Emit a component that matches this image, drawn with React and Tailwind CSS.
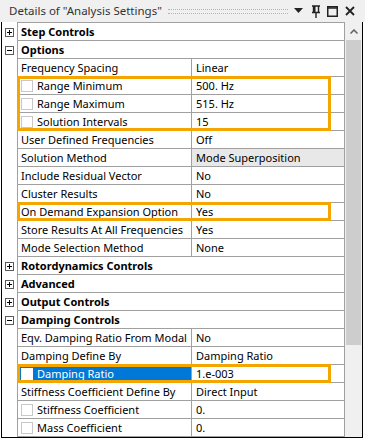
import React from 'react'

const rows = [
  { group: true, open: false, label: 'Step Controls' },
  { group: true, open: true, label: 'Options' },
  { label: 'Frequency Spacing', value: 'Linear' },
  { label: 'Range Minimum', value: '500. Hz', check: true },
  { label: 'Range Maximum', value: '515. Hz', check: true },
  { label: 'Solution Intervals', value: '15', check: true },
  { label: 'User Defined Frequencies', value: 'Off' },
  { label: 'Solution Method', value: 'Mode Superposition', shaded: true },
  { label: 'Include Residual Vector', value: 'No' },
  { label: 'Cluster Results', value: 'No' },
  { label: 'On Demand Expansion Option', value: 'Yes' },
  { label: 'Store Results At All Frequencies', value: 'Yes' },
  { label: 'Mode Selection Method', value: 'None' },
  { group: true, open: false, label: 'Rotordynamics Controls' },
  { group: true, open: false, label: 'Advanced' },
  { group: true, open: false, label: 'Output Controls' },
  { group: true, open: true, label: 'Damping Controls' },
  { label: 'Eqv. Damping Ratio From Modal', value: 'No' },
  { label: 'Damping Define By', value: 'Damping Ratio' },
  { label: 'Damping Ratio', value: '1.e-003', check: true, selected: true },
  { label: 'Stiffness Coefficient Define By', value: 'Direct Input' },
  { label: 'Stiffness Coefficient', value: '0.', check: true },
  { label: 'Mass Coefficient', value: '0.', check: true },
]

// orange highlight boxes: [first row, row count]
const highlights = [[3, 3], [10, 1], [19, 1]]

function Toggle({ open }) {
  return (
    <div className="w-[9px] h-[9px] border border-[#5a5a5a] bg-white relative">
      <div className="absolute left-[1px] top-[3px] w-[5px] h-[1px] bg-black" />
      {!open && <div className="absolute left-[3px] top-[1px] w-[1px] h-[5px] bg-black" />}
    </div>
  )
}

function Row({ row }) {
  if (row.group) {
    return (
      <div className="h-[18px] border-b border-[#a0a0a0] flex items-center pl-[3px] font-bold">
        {row.label}
      </div>
    )
  }
  return (
    <div className="h-[18px] border-b border-[#a0a0a0] flex">
      <div
        className={`w-[174px] shrink-0 border-r border-[#a0a0a0] flex items-center pl-[3px] overflow-hidden whitespace-nowrap ${
          row.selected ? 'bg-[#0078d7] text-white' : ''
        }`}
      >
        {row.check && (
          <div
            className={`w-[12px] h-[12px] shrink-0 mr-[4px] border ${
              row.selected ? 'bg-white border-white' : 'bg-white border-[#c8c8c8]'
            }`}
          />
        )}
        {row.label}
      </div>
      <div className={`flex-1 flex items-center pl-[4px] whitespace-nowrap ${row.shaded ? 'bg-[#e8e8e8]' : ''}`}>
        {row.value}
      </div>
    </div>
  )
}

export default function App() {
  return (
    <div
      className="w-[365px] h-[442px] bg-white text-black text-[11px] leading-none"
      style={{ fontFamily: '"Noto Sans", "Open Sans", sans-serif' }}
    >
      {/* title bar */}
      <div className="h-[22px] bg-[#f0f0f0] flex items-center pl-[9px] pr-[10px] text-[#333] text-[11.5px]">
        <span className="whitespace-nowrap">Details of "Analysis Settings"</span>
        <div className="flex-1 mx-[6px] h-[5px] border-y border-dotted border-[#b4b4b4]" />
        <svg width="10" height="6" viewBox="0 0 10 6" className="mr-[8px]">
          <path d="M0 0 H9 L4.5 5 Z" fill="#222" />
        </svg>
        <svg width="8" height="13" viewBox="0 0 8 13" className="mr-[7px]">
          <path d="M0 1 H8 M1.5 1 V7 M6.5 1 V7 M0 7.5 H8 M4 7.5 V13" stroke="#222" strokeWidth="1.4" fill="none" />
          <rect x="1.5" y="1" width="2" height="6" fill="#222" />
        </svg>
        <svg width="11" height="11" viewBox="0 0 11 11" className="mr-[7px]">
          <rect x="0.75" y="0.75" width="9.5" height="9.5" stroke="#222" strokeWidth="1.5" fill="none" />
          <path d="M0.75 2 H10.25" stroke="#222" strokeWidth="1.5" />
        </svg>
        <svg width="10" height="10" viewBox="0 0 10 10">
          <path d="M1 1 L9 9 M9 1 L1 9" stroke="#222" strokeWidth="1.8" />
        </svg>
      </div>

      {/* grid body */}
      <div className="ml-[1px] w-[362px] border-l border-r border-b border-black flex">
        <div className="w-[15px] shrink-0 flex flex-col pt-[1px]">
          {rows.map((r, i) => (
            <div key={i} className="h-[18px] flex items-center justify-center">
              {r.group && <Toggle open={r.open} />}
            </div>
          ))}
        </div>
        <div className="w-[328px] shrink-0 border-l border-r border-t border-[#a0a0a0] relative">
          {rows.map((r, i) => (
            <Row key={i} row={r} />
          ))}
          {highlights.map(([start, count]) => (
            <div
              key={start}
              className="absolute left-[-1px] w-[314px] border-[3px] border-[#f5a500] pointer-events-none"
              style={{ top: start * 18 - 1, height: count * 18 + 1 }}
            />
          ))}
        </div>
        {/* scrollbar */}
        <div className="w-[17px] shrink-0 bg-[#f0f0f0] flex flex-col">
          <div className="h-[18px] flex items-center justify-center">
            <svg width="8" height="5" viewBox="0 0 8 5">
              <path d="M0.5 4.5 L4 1 L7.5 4.5" stroke="#606060" strokeWidth="1.5" fill="none" />
            </svg>
          </div>
          <div className="mx-[1px] h-[305px] bg-[#cdcdcd]" />
        </div>
      </div>
    </div>
  )
}
